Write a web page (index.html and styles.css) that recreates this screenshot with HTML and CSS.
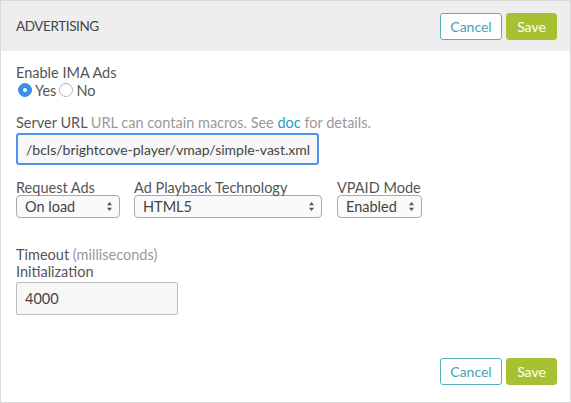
FILE: index.html
```html
<!DOCTYPE html>
<html>
<head>
<meta charset="utf-8">
<link rel="stylesheet" href="styles.css">
</head>
<body>
<div class="panel">
  <div class="header">
    <div class="title">ADVERTISING</div>
    <div class="actions">
      <button class="btn btn-cancel">Cancel</button>
      <button class="btn btn-save">Save</button>
    </div>
  </div>
  <div class="content">
    <div class="field">
      <div class="label">Enable IMA Ads</div>
      <div class="radios">
        <span class="radio checked"></span><span class="rlabel">Yes</span>
        <span class="radio"></span><span class="rlabel">No</span>
      </div>
    </div>
    <div class="field url-field">
      <div class="label">Server URL <span class="muted">URL can contain macros. See <a class="link">doc</a> for details.</span></div>
      <div class="input input-url">/bcls/brightcove-player/vmap/simple-vast.xml</div>
    </div>
    <div class="selects">
      <div class="sel-group">
        <div class="label">Request Ads</div>
        <div class="select sel-request"><span>On load</span><svg class="arrows" width="7" height="11" viewBox="0 0 7 11"><path d="M1 4.3 L3.5 1 L6 4.3 Z M1 6.7 L3.5 10 L6 6.7 Z" fill="#555"/></svg></div>
      </div>
      <div class="sel-group">
        <div class="label">Ad Playback Technology</div>
        <div class="select sel-tech"><span>HTML5</span><svg class="arrows" width="7" height="11" viewBox="0 0 7 11"><path d="M1 4.3 L3.5 1 L6 4.3 Z M1 6.7 L3.5 10 L6 6.7 Z" fill="#555"/></svg></div>
      </div>
      <div class="sel-group sel-group-vpaid">
        <div class="label">VPAID Mode</div>
        <div class="select sel-vpaid"><span>Enabled</span><svg class="arrows" width="7" height="11" viewBox="0 0 7 11"><path d="M1 4.3 L3.5 1 L6 4.3 Z M1 6.7 L3.5 10 L6 6.7 Z" fill="#555"/></svg></div>
      </div>
    </div>
    <div class="field timeout">
      <div class="label">Timeout <span class="muted">(milliseconds)</span></div>
      <div class="label label-init">Initialization</div>
      <div class="input input-time">4000</div>
    </div>
  </div>
  <div class="footer">
    <button class="btn btn-cancel">Cancel</button>
    <button class="btn btn-save">Save</button>
  </div>
</div>
</body>
</html>
```
FILE: styles.css
```css
* { box-sizing: border-box; }
html, body { margin: 0; padding: 0; background: #fff; }
body { font-family: "Lato", "Open Sans", sans-serif; color: #555; font-size: 14.5px; }
.panel {
  width: 571px; height: 403px;
  border: 1px solid #d9d9d9;
  display: flex; flex-direction: column;
}
.header {
  background: #eeeeee;
  height: 50px;
  flex: none;
  display: flex; align-items: center; justify-content: space-between;
  padding: 0 13px 0 15px;
}
.title { font-size: 13.5px; color: #444; letter-spacing: -0.4px; }
.actions { display: flex; gap: 4px; }
.btn {
  font-family: inherit; font-size: 14px;
  height: 27px; border-radius: 3px; padding: 0;
  cursor: pointer;
}
.btn-cancel { width: 62px; background: #fff; border: 1px solid #58aebf; color: #4a9fb3; }
.btn-save { width: 51px; background: #a6c232; border: 1px solid #a6c232; color: #fff; }
.content { flex: 1; padding: 13px 15px 0 15px; }
.label { line-height: 18px; }
.muted { color: #999; }
.link { color: #1d9fbf; text-decoration: none; }
.radios { display: flex; align-items: center; height: 18px; margin-top: -1px; }
.radio {
  width: 14px; height: 14px; border-radius: 50%;
  border: 1px solid #b5b5b5; background: #fff;
  display: inline-block; margin-left: 3px;
}
.radio.checked { background: #3a8ee6; border-color: #3a8ee6; position: relative; margin-left: 2px; }
.radio.checked::after {
  content: ""; position: absolute; left: 4px; top: 4px; width: 4px; height: 4px; border-radius: 50%; background: #fff;
}
.rlabel { margin-left: 3px; }
.url-field { margin-top: 15px; }
.input {
  background: #f7f7f7; border: 1px solid #bdbdbd; border-radius: 2px;
  padding: 0 8px; display: flex; align-items: center; white-space: nowrap;
}
.input-url { width: 303px; height: 32px; border: 2px solid #4c95e8; border-radius: 3px; margin-top: 1px; color: #444; font-size: 14px; }
.selects { display: flex; gap: 14px; margin-top: 14px; }
.select {
  height: 23px; border: 1px solid #aaa; border-radius: 4px; background: #fafafa;
  display: flex; align-items: center; justify-content: space-between;
  padding: 0 6px 0 8px; color: #444; margin-top: -2px;
}
.arrows { flex: none; }
.sel-request { width: 104px; }
.sel-tech { width: 188px; }
.sel-group-vpaid { margin-left: 1px; }
.sel-vpaid { width: 85px; }
.timeout { margin-top: 28px; }
.label-init { margin-top: -1px; }
.input-time { width: 162px; height: 33px; margin-top: 1px; color: #444; }
.footer { display: flex; justify-content: flex-end; gap: 4px; padding: 0 13px 17px 0; }
```
